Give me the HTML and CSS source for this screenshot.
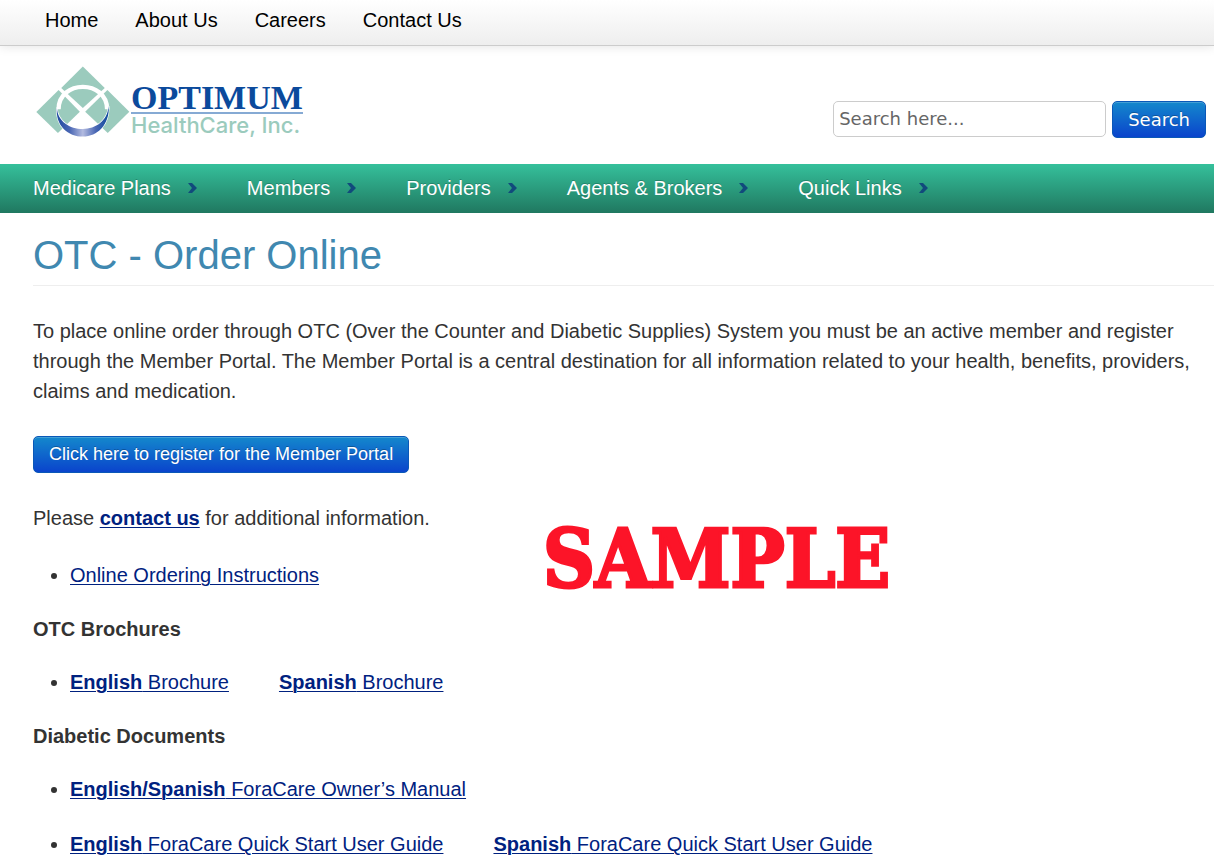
FILE: index.html
```html
<!DOCTYPE html>
<html lang="en">
<head>
<meta charset="utf-8">
<title>OTC - Order Online</title>
<link rel="stylesheet" href="styles.css">
</head>
<body>
<nav class="topbar" aria-label="Site">
  <a href="#">Home</a>
  <a href="#">About Us</a>
  <a href="#">Careers</a>
  <a href="#">Contact Us</a>
</nav>
<header class="header">
  <a class="logo" href="#" aria-label="Optimum HealthCare, Inc.">
    <svg class="logo-mark" viewBox="49 35 283 213" aria-hidden="true">
      <defs>
        <linearGradient id="bowl" x1="0" x2="1">
          <stop offset="0" stop-color="#1f4aa0"/>
          <stop offset=".25" stop-color="#4a67b4"/>
          <stop offset=".5" stop-color="#b3bbe0"/>
          <stop offset=".75" stop-color="#4a67b4"/>
          <stop offset="1" stop-color="#0b4a9c"/>
        </linearGradient>
      </defs>
      <g fill="#9bcbbd">
        <path d="M190 36 256 101 190 161 125 101Z"/>
        <path d="M50 173 117 107 181 172 115 236Z"/>
        <path d="M330 172 264 107 197 172 265 236Z"/>
      </g>
      <path d="M117 165C117 75 263 75 263 165" fill="none" stroke="#fff" stroke-width="13"/>
      <path d="M112 160C114 202 151 224 190 224S264 200 268 155C271 211 234 247 190 247S107 215 112 160Z" fill="url(#bowl)" stroke="#fff" stroke-width="4" paint-order="stroke"/>
    </svg>
    <span class="logo-text">
      <span class="logo-name">OPTIMUM</span>
      <span class="logo-sub">HealthCare, Inc.</span>
    </span>
  </a>
  <form class="search">
    <input class="search-box" type="text" placeholder="Search here..." aria-label="Search">
    <button class="btn search-btn" type="submit">Search</button>
  </form>
</header>
<nav class="mainnav" aria-label="Main">
  <a href="#">Medicare Plans <svg class="chev" viewBox="0 0 9 10" aria-hidden="true"><path d="M0 0H4L9 5 4 10H0L4 5Z"/></svg></a>
  <a href="#">Members <svg class="chev" viewBox="0 0 9 10" aria-hidden="true"><path d="M0 0H4L9 5 4 10H0L4 5Z"/></svg></a>
  <a href="#">Providers <svg class="chev" viewBox="0 0 9 10" aria-hidden="true"><path d="M0 0H4L9 5 4 10H0L4 5Z"/></svg></a>
  <a href="#">Agents &amp; Brokers <svg class="chev" viewBox="0 0 9 10" aria-hidden="true"><path d="M0 0H4L9 5 4 10H0L4 5Z"/></svg></a>
  <a href="#">Quick Links <svg class="chev" viewBox="0 0 9 10" aria-hidden="true"><path d="M0 0H4L9 5 4 10H0L4 5Z"/></svg></a>
</nav>
<main class="content">
  <h1>OTC - Order Online</h1>
  <p class="intro">To place online order through OTC (Over the Counter and Diabetic Supplies) System you must be an active member and register through the Member Portal. The Member Portal is a central destination for all information related to your health, benefits, providers, claims and medication.</p>
  <button class="btn register" type="button">Click here to register for the Member Portal</button>
  <p class="contact">Please <a href="#"><b>contact us</b></a> for additional information.</p>
  <ul>
    <li><a href="#">Online Ordering Instructions</a></li>
  </ul>
  <h2>OTC Brochures</h2>
  <ul>
    <li><a href="#"><b>English</b> Brochure</a><a href="#"><b>Spanish</b> Brochure</a></li>
  </ul>
  <h2>Diabetic Documents</h2>
  <ul>
    <li><a href="#"><b>English/Spanish</b> ForaCare Owner’s Manual</a></li>
    <li><a href="#"><b>English</b> ForaCare Quick Start User Guide</a><a href="#"><b>Spanish</b> ForaCare Quick Start User Guide</a></li>
  </ul>
  <div class="stamp">SAMPLE</div>
</main>
</body>
</html>
```
FILE: styles.css
```css
* { box-sizing: border-box; }
html { overflow: hidden; }
body {
  margin: 0;
  background: #fff;
  color: #333;
  font: 20px/30px "Liberation Sans", Arial, sans-serif;
}
.topbar {
  display: flex;
  gap: 37px;
  padding: 5px 45px 10px;
  background: linear-gradient(#fff, #eee);
  border-bottom: 1px solid #ccc;
  box-shadow: 0 1px 10px rgba(0, 0, 0, .1);
}
.topbar a { color: #000; text-decoration: none; }
.header {
  display: flex;
  justify-content: space-between;
  align-items: flex-start;
  padding: 20px 8px 26px 36px;
}
.logo { display: flex; text-decoration: none; }
.logo-mark { width: 94px; height: 71px; }
.logo-text {
  display: flex;
  flex-direction: column;
  padding-top: 17px;
  margin-left: 1px;
}
.logo-name {
  border-bottom: 2px solid #86aad4;
  color: #0b4a9c;
  font: bold 34px/29px "Liberation Serif", serif;
}
.logo-sub { color: #9bcbbd; font: 500 22px/22px Inter, sans-serif; }
.search { display: flex; gap: 6px; padding-top: 35px; }
.search-box {
  width: 273px;
  height: 36px;
  padding: 0 5px 2px;
  border: 1px solid #ccc;
  border-radius: 5px;
  background: #fff;
  font: 18px "DejaVu Sans", sans-serif;
}
.search-box::placeholder { color: #666; opacity: 1; }
.btn {
  height: 37px;
  padding: 0 15px;
  border: 1px solid #0a58b8;
  border-radius: 5px;
  background: linear-gradient(#1488cc, #0a44cc);
  box-shadow: inset 0 1px 0 rgba(255, 255, 255, .2);
  color: #fff;
  font: 18px "Liberation Sans", Arial, sans-serif;
  text-shadow: 0 -1px 0 rgba(0, 0, 0, .25);
}
.search-btn { font-family: "DejaVu Sans", sans-serif; }
.mainnav {
  display: flex;
  gap: 50px;
  padding: 9px 33px 10px;
  background: linear-gradient(#35c09b, #207860);
}
.mainnav a {
  display: flex;
  align-items: center;
  gap: 17px;
  color: #fff;
  text-decoration: none;
  text-shadow: 0 -1px 0 rgba(0, 0, 0, .2);
}
.chev { width: 9px; height: 10px; fill: #114a7c; }
.content { position: relative; padding-left: 33px; }
h1 {
  margin: 0 0 30px;
  padding: 17px 0 5px;
  border-bottom: 1px solid #eee;
  color: #4088b0;
  font-size: 40px;
  font-weight: normal;
  line-height: 50px;
}
p { margin: 0; }
.intro { padding-right: 20px; margin-bottom: 30px; }
.register { display: block; }
.contact { margin: 30px 0 27px; }
h2 { margin: 24px 0 23px; font-size: 20px; line-height: 30px; }
ul { margin: 0; padding-left: 37px; }
li + li { margin-top: 25px; }
li a + a { margin-left: 50px; }
.content a {
  color: #00217f;
  text-decoration-thickness: 1px;
  text-underline-offset: 2px;
}
.stamp {
  position: absolute;
  top: 296px;
  left: 543px;
  color: #fc1428;
  font: bold 80px/100px "DejaVu Serif Condensed", "DejaVu Serif", serif;
  -webkit-text-stroke: 3px #fc1428;
}
```
